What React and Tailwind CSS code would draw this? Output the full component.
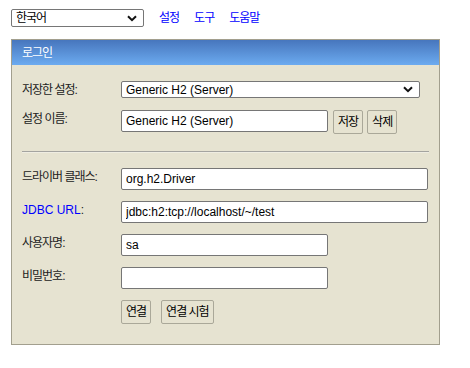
import React, { useState } from "react";

const font = "font-['Liberation_Sans','Noto_Sans_CJK_KR',sans-serif]";

// korean glyphs in the reference run narrower than Noto CJK
const ko = "tracking-[-1px]";

function Chevron() {
  return (
    <svg width="10" height="7" viewBox="0 0 10 7" className="shrink-0">
      <path d="M1 1.2 L5 5.2 L9 1.2" fill="none" stroke="#111" strokeWidth="2" />
    </svg>
  );
}

function FakeSelect({ value, className, korean }) {
  return (
    <div
      className={`flex items-center justify-between bg-white border border-[#767676] rounded-[2px] pl-[4px] pr-[6px] ${className}`}
    >
      <span className={`text-[12px] leading-none text-black ${korean ? ko : ""}`}>{value}</span>
      <Chevron />
    </div>
  );
}

function Field({ value, setValue, width, type = "text" }) {
  return (
    <input
      type={type}
      value={value}
      onChange={(e) => setValue(e.target.value)}
      className={`h-[22px] ${width} bg-white border border-[#767676] rounded-[2px] px-[4px] text-[12px] text-black outline-none`}
    />
  );
}

function Btn({ children }) {
  return (
    <button className={`h-[24px] px-[4px] border border-[#aaa899] rounded-[2px] text-[12px] text-black bg-transparent ${ko}`}>
      {children}
    </button>
  );
}

function Row({ label, blue, children }) {
  return (
    <div className="flex items-start">
      <div className={`w-[99px] shrink-0 text-[12px] leading-[18px] text-[#222]`}>
        {blue ? (
          <>
            <span className="text-[#0000ff]">JDBC URL</span>:
          </>
        ) : (
          <span className={ko}>{label}</span>
        )}
      </div>
      {children}
    </div>
  );
}

export default function App() {
  const [name, setName] = useState("Generic H2 (Server)");
  const [driver, setDriver] = useState("org.h2.Driver");
  const [url, setUrl] = useState("jdbc:h2:tcp://localhost/~/test");
  const [user, setUser] = useState("sa");
  const [password, setPassword] = useState("");

  return (
    <div className={`${font} w-[470px] h-[368px] bg-white pt-[9px] pl-[11px]`}>
      {/* TOP BAR */}
      <div className="flex items-center h-[18px]">
        <FakeSelect value="한국어" korean className="w-[133px] h-[18px]" />
        <div className={`flex gap-[15px] ml-[15px] text-[12px] text-[#0000ff] ${ko}`}>
          <span className="cursor-pointer">설정</span>
          <span className="cursor-pointer">도구</span>
          <span className="cursor-pointer">도움말</span>
        </div>
      </div>

      {/* LOGIN PANEL */}
      <div className="mt-[12px] w-[429px] border border-[#a29f8e] bg-[#e6e3d1]">
        <div className={`h-[25px] bg-gradient-to-b from-[#4776bd] to-[#6cabf0] pl-[10px] flex items-center text-[12px] text-white ${ko}`}>
          로그인
        </div>

        <div className="pl-[10px] pt-[16px] pb-[20px]">
          <Row label="저장한 설정:">
            <FakeSelect value="Generic H2 (Server)" className="w-[299px] h-[17px]" />
          </Row>

          <div className="mt-[11px]">
            <Row label="설정 이름:">
              <Field value={name} setValue={setName} width="w-[207px]" />
              <div className="flex gap-[4px] ml-[5px]">
                <Btn>저장</Btn>
                <Btn>삭제</Btn>
              </div>
            </Row>
          </div>

          <div className="mt-[17px] mr-[10px] border-t border-[#a4a4a0] border-b border-b-[#efede2]" />

          <div className="mt-[15px] flex flex-col gap-[11px]">
            <Row label="드라이버 클래스:">
              <Field value={driver} setValue={setDriver} width="w-[307px]" />
            </Row>
            <Row blue>
              <Field value={url} setValue={setUrl} width="w-[307px]" />
            </Row>
            <Row label="사용자명:">
              <Field value={user} setValue={setUser} width="w-[207px]" />
            </Row>
            <Row label="비밀번호:">
              <Field value={password} setValue={setPassword} width="w-[207px]" type="password" />
            </Row>
            <Row label="">
              <div className="flex gap-[10px]">
                <Btn>연결</Btn>
                <Btn>연결 시험</Btn>
              </div>
            </Row>
          </div>
        </div>
      </div>
    </div>
  );
}
